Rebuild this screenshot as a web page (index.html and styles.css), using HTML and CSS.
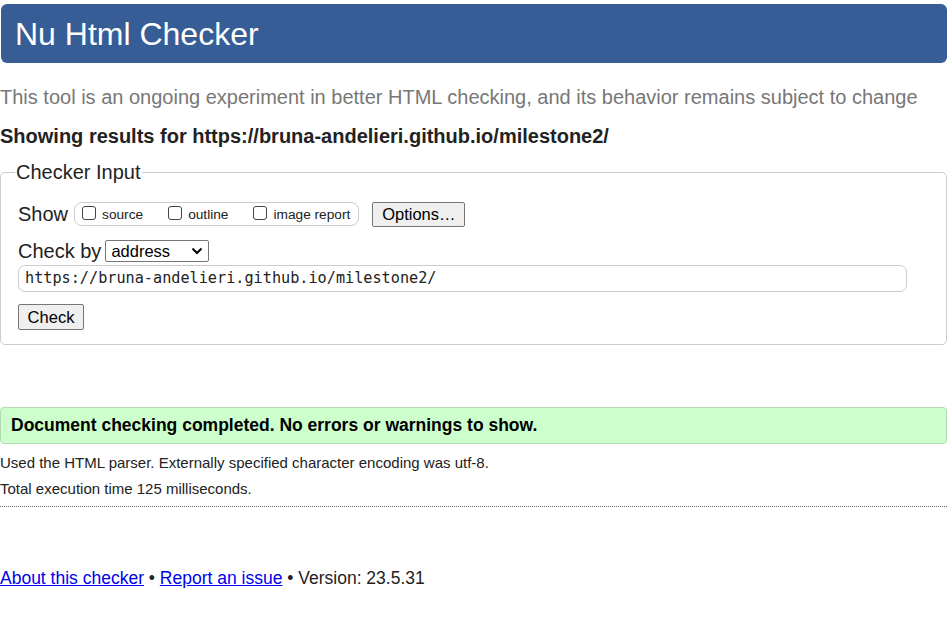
FILE: index.html
```html
<!DOCTYPE html>
<html>
<head>
<meta charset="utf-8">
<title>Nu Html Checker</title>
<link rel="stylesheet" href="styles.css">
</head>
<body>
<h1 class="banner">Nu Html Checker</h1>
<p class="tagline">This tool is an ongoing experiment in better HTML checking, and its behavior remains subject to change</p>
<p class="showing">Showing results for https://bruna-andelieri.github.io/milestone2/</p>
<fieldset class="input-box">
  <legend class="legend">Checker Input</legend>
  <div class="row show-row">
    <span class="row-label">Show</span>
    <fieldset class="show-opts">
      <label class="opt"><input type="checkbox" class="cb"><span>source</span></label>
      <label class="opt"><input type="checkbox" class="cb"><span>outline</span></label>
      <label class="opt"><input type="checkbox" class="cb"><span>image report</span></label>
    </fieldset>
    <button class="btn options-btn">Options…</button>
  </div>
  <div class="row checkby-row">
    <span class="row-label">Check by</span>
    <div class="select">
      <span>address</span>
      <svg class="chev" width="12" height="8" viewBox="0 0 12 8"><path d="M1.5 1.5 L6 6 L10.5 1.5" fill="none" stroke="#000" stroke-width="2"/></svg>
    </div>
  </div>
  <div class="url">https://bruna-andelieri.github.io/milestone2/</div>
  <button class="btn check-btn">Check</button>
</fieldset>
<div class="success">Document checking completed. No errors or warnings to show.</div>
<p class="detail">Used the HTML parser. Externally specified character encoding was utf-8.</p>
<p class="detail">Total execution time 125 milliseconds.</p>
<hr class="rule">
<p class="footer"><a href="#">About this checker</a> • <a href="#">Report an issue</a> • Version: 23.5.31</p>
</body>
</html>
```
FILE: styles.css
```css
html, body {
  margin: 0;
  padding: 0;
  background: #fff;
}
body {
  font-family: "Liberation Sans", Arial, sans-serif;
  color: #222;
  width: 947px;
}
.banner {
  margin: 4px 0 0 1px;
  height: 59px;
  box-sizing: border-box;
  background: #365d95;
  color: #fff;
  font-weight: normal;
  font-size: 32px;
  line-height: 60px;
  padding-left: 14px;
  border-radius: 6px;
}
.tagline {
  margin: 22px 0 0 0;
  font-size: 20px;
  line-height: 24px;
  color: #777;
}
.showing {
  margin: 15px 0 0 0;
  font-size: 20px;
  line-height: 24px;
  font-weight: bold;
  color: #222;
}
.input-box {
  margin: 13px 0 0 0;
  border: 1px solid #ccc;
  border-radius: 5px;
  padding: 5px 17px 14px 17px;
  min-width: 0;
}
.legend {
  font-size: 20px;
  padding: 0 1px;
  margin-left: -3px;
  color: #222;
}
.row {
  display: flex;
  align-items: center;
}
.show-row {
  margin-top: 12px;
  height: 26px;
}
.row-label {
  font-size: 20px;
  color: #222;
}
.show-opts {
  margin: 0 0 0 6px;
  padding: 0 4px 0 7px;
  border: 1px solid #ccc;
  border-radius: 8px;
  height: 24px;
  box-sizing: border-box;
  display: flex;
  align-items: center;
  min-width: 0;
}
.opt {
  display: flex;
  align-items: center;
  font-size: 13.7px;
  color: #222;
  margin-right: 25px;
}
.opt:last-child { margin-right: 4px; }
.cb {
  appearance: none;
  -webkit-appearance: none;
  width: 14px;
  height: 14px;
  border: 1px solid #444;
  border-radius: 3px;
  margin: 0 6px 3px 0;
  background: #fff;
}
.btn {
  font-family: "Liberation Sans", Arial, sans-serif;
  font-size: 16.5px;
  color: #000;
  background: #efefef;
  border: 1px solid #767676;
  border-radius: 2px;
  padding: 0 8px;
  height: 25px;
}
.options-btn {
  margin-left: 13px;
  width: 93px;
}
.checkby-row {
  margin-top: 11px;
  height: 26px;
}
.select {
  margin-left: 4px;
  width: 104px;
  height: 22px;
  box-sizing: border-box;
  border: 1px solid #767676;
  border-radius: 2px;
  display: flex;
  align-items: center;
  justify-content: space-between;
  padding: 0 5px 0 5px;
  font-size: 16.5px;
  color: #000;
}
.url {
  margin-top: 1px;
  width: 889px;
  height: 27px;
  box-sizing: border-box;
  border: 1px solid #ccc;
  border-radius: 7px;
  padding-left: 6px;
  font-family: "DejaVu Sans Mono", "Liberation Mono", monospace;
  font-size: 15.2px;
  line-height: 25px;
  color: #222;
}
.check-btn {
  display: block;
  margin-top: 12px;
  width: 66px;
  height: 26px;
}
.success {
  margin: 62px 0 0 0;
  height: 37px;
  box-sizing: border-box;
  background: #ccffcc;
  border: 1px solid #b4dab4;
  border-radius: 4px;
  padding-left: 10px;
  font-size: 17.5px;
  font-weight: bold;
  line-height: 35px;
  color: #000;
}
.detail {
  margin: 0;
  font-size: 15px;
  line-height: 26px;
  color: #222;
}
.success + .detail { margin-top: 6px; }
.rule {
  margin: 4px 0 0 0;
  border: 0;
  border-top: 1px dotted #666;
  height: 0;
}
.footer {
  margin: 60px 0 0 0;
  font-size: 17.5px;
  line-height: 22px;
  color: #222;
}
.footer a {
  color: #0000ee;
}
```
